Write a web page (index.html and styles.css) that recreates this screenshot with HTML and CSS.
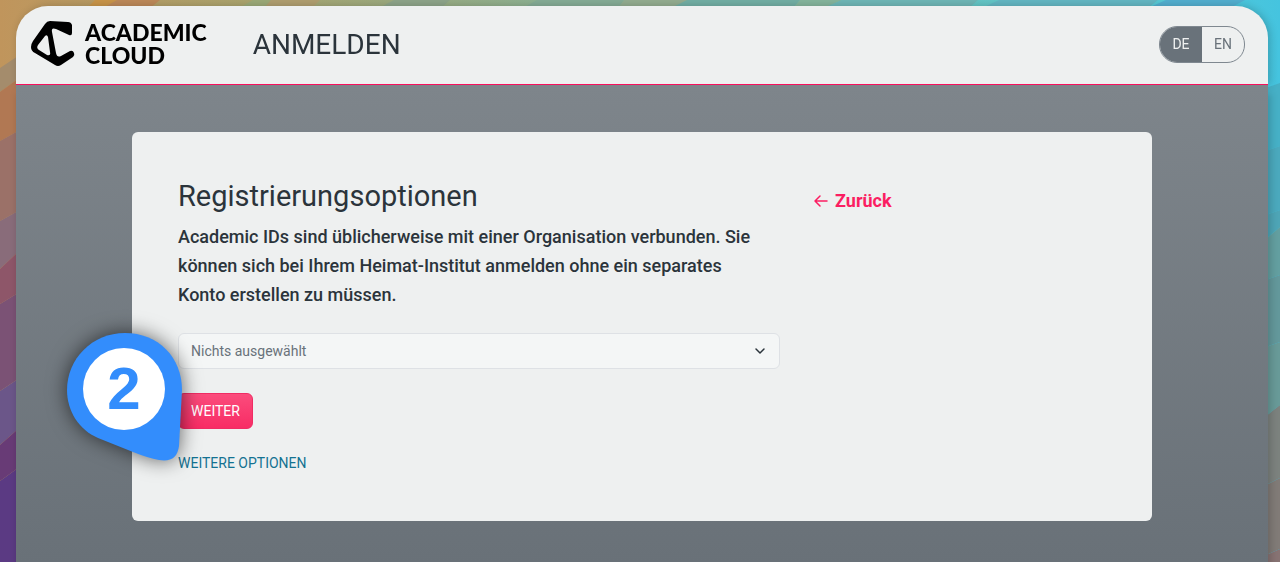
FILE: index.html
```
<!DOCTYPE html>
<html lang="de">
<head>
    <meta charset="UTF-8">
    <meta name="viewport" content="width=device-width, initial-scale=1.0">
    <title>Academic Cloud - Anmelden</title>
    <link rel="stylesheet" href="styles.css">
</head>
<body>
    <svg class="backdrop" viewBox="0 0 1280 562" preserveAspectRatio="none" aria-hidden="true">
        <defs>
            <linearGradient id="top" x1="0" x2="1">
                <stop offset="0" stop-color="#c0955c"/>
                <stop offset="0.2" stop-color="#aaa56f"/>
                <stop offset="0.38" stop-color="#93ae8a"/>
                <stop offset="0.6" stop-color="#70bfb4"/>
                <stop offset="0.88" stop-color="#5bcad2"/>
                <stop offset="1" stop-color="#45c4df"/>
            </linearGradient>
        </defs>
        <rect width="1280" height="562" fill="url(#top)"/>
        <!-- top edge -->
        <path d="M87 8 95 0H118L104 8Z" fill="#c99549"/>
        <path d="M103 8 117 0H160L150 8Z" fill="#bd8959"/>
        <path d="M239 8 253 0H276L264 8Z" fill="#9caa78"/>
        <path d="M264 8 271 0H320L312 8Z" fill="#b09f70"/>
        <path d="M379 8 394 0H450L441 8Z" fill="#8ea58a"/>
        <path d="M523 8 537 0H624L618 8Z" fill="#85ac96"/>
        <path d="M618 8 624 0H700L671 8Z" fill="#94ad90"/>
        <path d="M671 8 687 0H800L793 8Z" fill="#73afa5"/>
        <path d="M793 8 800 0H842L824 8Z" fill="#85b59d"/>
        <path d="M824 8 842 0H978L969 8Z" fill="#6fb7b7"/>
        <path d="M982 8 999 0H1158L1148 8Z" fill="#63b7c3"/>
        <path d="M1148 8 1166 0H1245L1230 8Z" fill="#53afd0"/>
        <!-- left edge -->
        <path d="M0 68 18 56V79L0 92Z" fill="#a48c6c"/>
        <path d="M0 92 18 79V131L0 141Z" fill="#b17853"/>
        <path d="M0 141 18 131V211L0 221Z" fill="#9b7168"/>
        <path d="M0 221 18 211V252L0 269Z" fill="#896c7a"/>
        <path d="M0 269 18 252V293L0 304Z" fill="#8e5669"/>
        <path d="M0 304 18 293V379L0 391Z" fill="#7b5275"/>
        <path d="M0 391 18 379V429L0 445Z" fill="#6b5689"/>
        <path d="M0 445 18 429V468L0 481Z" fill="#683b76"/>
        <path d="M0 481 18 468V562H0Z" fill="#5b3a83"/>
        <!-- right edge -->
        <path d="M1266 88 1280 83V146L1266 151Z" fill="#46b0c6"/>
        <path d="M1266 151 1280 146V210L1266 215Z" fill="#4ba9bd"/>
        <path d="M1266 215 1280 210V227L1266 239Z" fill="#4ea5b6"/>
        <path d="M1266 239 1280 227V275L1266 280Z" fill="#639fa0"/>
        <path d="M1266 280 1280 275V342L1266 347Z" fill="#63989b"/>
        <path d="M1266 347 1280 342V405L1266 416Z" fill="#689a98"/>
        <path d="M1266 416 1280 405V478L1266 485Z" fill="#7c827e"/>
        <path d="M1266 485 1280 478V549L1266 555Z" fill="#817b77"/>
        <path d="M1266 555 1280 549V562H1266Z" fill="#877373"/>
    </svg>

    <div class="page">
        <header class="header">
            <a class="logo" href="#">
                <svg class="logo-mark" viewBox="0 0 44 46" aria-hidden="true">
                    <path fill-rule="evenodd" d="M19 0 37 1Q40 1 41 4V12Q41 15 38 14L25 8Q20 6 21 11L25 32Q26 37 30 35L39 30Q42 29 43 32 44 34 42 36L30 44Q27 46 24 44L4 32Q0 30 0 26 0 23 2 20L14 3Q16 0 19 0ZM14 15 7 24Q5 27 8 29L16 34Q20 35 19 31L17 16Q16 13 14 15Z"/>
                </svg>
                <span class="logo-text">ACADEMIC<br>CLOUD</span>
            </a>
            <h1>ANMELDEN</h1>
            <div class="languages">
                <button class="language active" type="button">DE</button>
                <button class="language" type="button">EN</button>
            </div>
        </header>

        <main class="content">
            <div class="card">
                <section>
                    <h2>Registrierungsoptionen</h2>
                    <p class="intro">Academic IDs sind üblicherweise mit einer Organisation verbunden. Sie können sich bei Ihrem Heimat-Institut anmelden ohne ein separates Konto erstellen zu müssen.</p>

                    <form class="options">
                        <div class="select-box">
                            <select class="institution" aria-label="Institution">
                                <option>Nichts ausgewählt</option>
                            </select>
                            <svg class="chevron" viewBox="0 0 12 8" aria-hidden="true"><path d="M2 2 6 6 10 2"/></svg>
                        </div>
                        <button class="submit" type="submit">WEITER</button>
                        <a class="more" href="#">WEITERE OPTIONEN</a>

                        <!-- step marker -->
                        <svg class="marker" viewBox="67 333 116 128" role="img" aria-label="Schritt 2">
                            <path fill="#338dfc" d="M125 333C158 333 182 357 182 390L179 446Q177 463 159 460 148 458 133 452L98 438C79 430 67 411 67 390 67 359 92 333 125 333Z"/>
                            <circle cx="124" cy="389" r="41" fill="#fff"/>
                            <text x="124" y="409" text-anchor="middle">2</text>
                        </svg>
                    </form>
                </section>

                <a class="back" href="#">
                    <svg class="arrow" viewBox="0 0 14 12" aria-hidden="true"><path d="M6 1 1 6 6 11M1 6H13"/></svg>
                    Zurück
                </a>
            </div>
        </main>
    </div>
</body>
</html>
```
FILE: styles.css
```
* {
    box-sizing: border-box;
}

body {
    margin: 0;
    min-height: 100vh;
    font-family: Roboto, sans-serif;
    color: #2b343b;
}

h1, h2, p {
    margin: 0;
    font-weight: 400;
}

a {
    text-decoration: none;
}

.backdrop {
    position: fixed;
    z-index: -1;
    width: 100%;
    height: 100%;
}

.page {
    display: flex;
    flex-direction: column;
    min-height: 100vh;
    padding: 6px 12px 0 16px;
}

.header {
    display: flex;
    align-items: center;
    height: 79px;
    padding: 0 23px 2px 15px;
    background-color: #eef0f0;
    border-bottom: 1px solid #f80f5c;
    border-radius: 32px 32px 0 0;
    box-shadow: 2px 0 8px rgba(0, 0, 0, 0.2);
}

.logo {
    display: flex;
    align-items: center;
    gap: 10px;
    color: #000;
}

.logo-mark {
    width: 44px;
    height: 46px;
}

.logo-text {
    font-family: Lato, sans-serif;
    font-size: 23px;
    font-weight: 900;
    line-height: 23px;
}

.header h1 {
    margin-left: 46px;
    font-size: 28px;
}

.languages {
    display: flex;
    margin-left: auto;
    border: 1px solid #7f8890;
    border-radius: 18px;
    overflow: hidden;
}

.language {
    width: 42px;
    height: 35px;
    padding: 0;
    border: none;
    background-color: transparent;
    font: 14px Roboto, sans-serif;
    color: #69727a;
}

.language.active {
    background-color: #69727a;
    color: #eef0f0;
}

.content {
    flex: 1;
    padding: 47px 24px 40px;
    background: linear-gradient(#7e858b, #697178);
    box-shadow: 2px 8px 8px rgba(0, 0, 0, 0.2);
}

.card {
    display: grid;
    grid-template-columns: 33fr 16fr;
    gap: 34px;
    align-items: start;
    max-width: 1020px;
    margin: 0 auto;
    padding: 46px;
    background-color: #eef0f0;
    border-radius: 6px;
}

.card h2 {
    font-size: 29px;
    line-height: 36px;
}

.intro {
    margin-top: 8px;
    padding-right: 24px;
    font-size: 18px;
    font-weight: 500;
    line-height: 29px;
}

.options {
    position: relative;
    display: flex;
    flex-direction: column;
    align-items: flex-start;
    margin-top: 24px;
}

.select-box {
    display: grid;
    align-items: center;
    width: 100%;
}

.institution {
    grid-area: 1 / 1;
    width: 100%;
    height: 36px;
    padding: 0 12px;
    appearance: none;
    background-color: #f4f6f6;
    border: 1px solid #dee1e5;
    border-radius: 6px;
    font: 14px Roboto, sans-serif;
    color: #69727a;
}

.chevron {
    grid-area: 1 / 1;
    justify-self: end;
    width: 12px;
    height: 8px;
    margin-right: 14px;
    fill: none;
    stroke: #2b343b;
    stroke-width: 1.5;
    stroke-linecap: round;
    stroke-linejoin: round;
    pointer-events: none;
}

.submit {
    height: 36px;
    margin-top: 24px;
    padding: 0 12px;
    background: linear-gradient(#fb4c7c, #f82c65);
    border: 1px solid #f02c64;
    border-radius: 6px;
    font: 14px Roboto, sans-serif;
    color: #fff;
}

.more {
    margin-top: 22px;
    font-size: 14px;
    line-height: 24px;
    color: #147292;
}

.marker {
    position: absolute;
    top: 0;
    left: -111px;
    width: 116px;
    height: 128px;
    overflow: visible;
    filter: drop-shadow(0 0 10px rgba(0, 0, 0, 0.6));
}

.marker text {
    font: bold 60px "Liberation Sans", sans-serif;
    fill: #338dfc;
}

.back {
    display: flex;
    align-items: center;
    gap: 7px;
    margin-top: 8px;
    font-size: 18px;
    font-weight: 700;
    line-height: 29px;
    color: #fb1e62;
}

.arrow {
    width: 14px;
    height: 12px;
    fill: none;
    stroke: currentColor;
    stroke-width: 1.5;
    stroke-linecap: round;
    stroke-linejoin: round;
}

@media (max-width: 768px) {
    .card {
        grid-template-columns: 1fr;
    }
}
```
